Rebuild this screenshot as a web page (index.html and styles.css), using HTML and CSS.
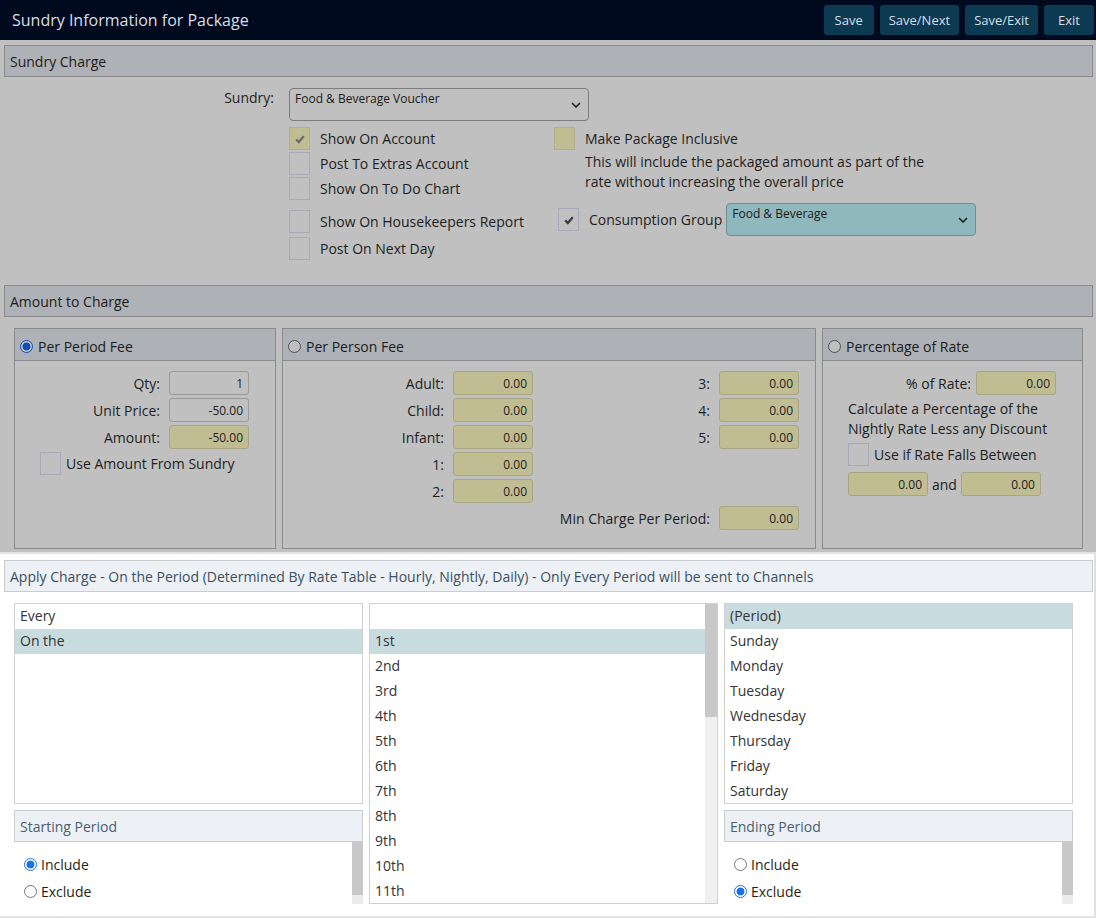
FILE: index.html
```html
<!DOCTYPE html>
<html lang="en">
<head>
<meta charset="utf-8">
<title>Sundry Information for Package</title>
<link rel="stylesheet" href="styles.css">
</head>
<body>
<header class="topbar">
  <h1 class="title">Sundry Information for Package</h1>
  <div class="actions">
    <button class="btn">Save</button>
    <button class="btn">Save/Next</button>
    <button class="btn">Save/Exit</button>
    <button class="btn">Exit</button>
  </div>
</header>

<main class="locked">
  <div class="section-head">Sundry Charge</div>

  <div class="sundry-row">
    <span class="sundry-label">Sundry:</span>
    <div class="select sundry-select">
      <span class="select-text">Food &amp; Beverage Voucher</span>
      <svg class="chev" width="10" height="6" viewBox="0 0 10 6"><path d="M1 1 L5 5 L9 1" fill="none" stroke="#1a1a1a" stroke-width="1.5"/></svg>
    </div>
  </div>

  <div class="flags">
    <div class="flag f-r1 f-c1"><span class="cb cb-tan"><svg width="12" height="12" viewBox="0 0 12 12"><path d="M2.2 6.4 L4.8 9 L9.8 3.2" fill="none" stroke="#6c6c74" stroke-width="2.4"/></svg></span>Show On Account</div>
    <div class="flag f-r1 f-c2"><span class="cb cb-tan"></span>Make Package Inclusive</div>
    <div class="flag f-r2 f-c1"><span class="cb"></span>Post To Extras Account</div>
    <p class="note">This will include the packaged amount as part of the<br>rate without increasing the overall price</p>
    <div class="flag f-r3 f-c1"><span class="cb"></span>Show On To Do Chart</div>
    <div class="flag f-r4 f-c1 f-low"><span class="cb"></span>Show On Housekeepers Report</div>
    <div class="consume">
      <span class="cb"><svg width="12" height="12" viewBox="0 0 12 12"><path d="M2.2 6.4 L4.8 9 L9.8 3.2" fill="none" stroke="#3c3c48" stroke-width="2.4"/></svg></span>
      <span class="consume-label">Consumption Group</span>
      <div class="select teal-select">
        <span class="select-text">Food &amp; Beverage</span>
        <svg class="chev" width="10" height="6" viewBox="0 0 10 6"><path d="M1 1 L5 5 L9 1" fill="none" stroke="#1a1a1a" stroke-width="1.5"/></svg>
      </div>
    </div>
    <div class="flag f-r5 f-c1"><span class="cb"></span>Post On Next Day</div>
  </div>

  <div class="section-head amount-head">Amount to Charge</div>

  <div class="panels">
    <div class="panel">
      <div class="panel-head"><span class="radio radio-on"></span>Per Period Fee</div>
      <div class="panel-body">
        <div class="fields fields-period">
          <span class="flabel">Qty:</span><span class="num num-grey">1</span>
          <span class="flabel">Unit Price:</span><span class="num num-grey">-50.00</span>
          <span class="flabel">Amount:</span><span class="num">-50.00</span>
        </div>
        <div class="check-line sundry-amount"><span class="cb"></span>Use Amount From Sundry</div>
      </div>
    </div>

    <div class="panel">
      <div class="panel-head"><span class="radio"></span>Per Person Fee</div>
      <div class="panel-body">
        <div class="fields fields-person">
          <span class="flabel">Adult:</span><span class="num">0.00</span><span class="flabel">3:</span><span class="num">0.00</span>
          <span class="flabel">Child:</span><span class="num">0.00</span><span class="flabel">4:</span><span class="num">0.00</span>
          <span class="flabel">Infant:</span><span class="num">0.00</span><span class="flabel">5:</span><span class="num">0.00</span>
          <span class="flabel">1:</span><span class="num">0.00</span><span></span><span></span>
          <span class="flabel">2:</span><span class="num">0.00</span><span></span><span></span>
          <span></span><span></span><span class="flabel">Min Charge Per Period:</span><span class="num">0.00</span>
        </div>
      </div>
    </div>

    <div class="panel">
      <div class="panel-head"><span class="radio"></span>Percentage of Rate</div>
      <div class="panel-body pct-body">
        <div class="pct-row"><span class="flabel">% of Rate:</span><span class="num">0.00</span></div>
        <p class="pct-note">Calculate a Percentage of the<br>Nightly Rate Less any Discount</p>
        <div class="check-line pct-check"><span class="cb"></span>Use if Rate Falls Between</div>
        <div class="between"><span class="num">0.00</span><span>and</span><span class="num">0.00</span></div>
      </div>
    </div>
  </div>
</main>

<section class="apply">
  <div class="apply-head">Apply Charge - On the Period (Determined By Rate Table - Hourly, Nightly, Daily) - Only Every Period will be sent to Channels</div>
  <div class="pickers">
    <div class="pick-col">
      <ul class="list list-short">
        <li>Every</li>
        <li class="sel">On the</li>
      </ul>
      <div class="period">
        <div class="period-head">Starting Period</div>
        <div class="period-body">
          <div class="period-opts">
            <div class="opt"><span class="radio radio-blue"></span>Include</div>
            <div class="opt"><span class="radio radio-white"></span>Exclude</div>
          </div>
          <div class="sb sb-small"><div class="thumb"></div></div>
        </div>
      </div>
    </div>

    <div class="list list-tall">
      <ul class="list-items">
        <li>&nbsp;</li>
        <li class="sel">1st</li>
        <li>2nd</li>
        <li>3rd</li>
        <li>4th</li>
        <li>5th</li>
        <li>6th</li>
        <li>7th</li>
        <li>8th</li>
        <li>9th</li>
        <li>10th</li>
        <li>11th</li>
      </ul>
      <div class="sb sb-list"><div class="thumb"></div></div>
    </div>

    <div class="pick-col">
      <ul class="list list-short">
        <li class="sel">(Period)</li>
        <li>Sunday</li>
        <li>Monday</li>
        <li>Tuesday</li>
        <li>Wednesday</li>
        <li>Thursday</li>
        <li>Friday</li>
        <li>Saturday</li>
      </ul>
      <div class="period">
        <div class="period-head">Ending Period</div>
        <div class="period-body">
          <div class="period-opts">
            <div class="opt"><span class="radio radio-white"></span>Include</div>
            <div class="opt"><span class="radio radio-blue"></span>Exclude</div>
          </div>
          <div class="sb sb-small"><div class="thumb"></div></div>
        </div>
      </div>
    </div>
  </div>
</section>
</body>
</html>
```

FILE: styles.css
```css
* { box-sizing: border-box; }

html, body {
  margin: 0;
  padding: 0;
}

body {
  width: 1096px;
  height: 919px;
  overflow: hidden;
  font-family: "Open Sans", "Noto Sans", "Liberation Sans", sans-serif;
  font-size: 14px;
  color: #1e1e1e;
  background: #ffffff;
}

/* ---------- top bar ---------- */
.topbar {
  height: 40px;
  background: #000a1f;
  display: flex;
  align-items: center;
  justify-content: space-between;
  padding: 0 2px 0 12px;
}

.title {
  margin: 0;
  font-size: 16px;
  font-weight: 400;
  color: #d9dee5;
}

.actions {
  display: flex;
  gap: 6px;
}

.btn {
  min-width: 50px;
  height: 30px;
  padding: 0 9px;
  border: none;
  border-radius: 3px;
  background: #0b3a52;
  color: #d7dfe6;
  font-family: "Open Sans", "Noto Sans", sans-serif;
  font-size: 13px;
}

/* ---------- locked (greyed) area ---------- */
.locked {
  background: #c0c0c0;
  padding: 5px 0 3px 0;
}

.section-head {
  height: 32px;
  margin: 0 3px 0 4px;
  padding: 2px 0 0 5px;
  line-height: 28px;
  background: #aeb1b5;
  border: 1px solid #8b8b8b;
  color: #1c1c1c;
}

.sundry-row {
  display: flex;
  align-items: flex-start;
  margin-top: 11px;
}

.sundry-label {
  width: 289px;
  padding-right: 15px;
  padding-top: 0;
  text-align: right;
  line-height: 19px;
}

.select {
  display: flex;
  justify-content: space-between;
  align-items: flex-start;
  height: 33px;
  border: 1px solid #7c7c7c;
  border-radius: 4px;
  padding: 2px 7px 0 5px;
  font-size: 12px;
  line-height: 16px;
  color: #1a1a1a;
}

.select .chev {
  align-self: center;
  margin-top: -1px;
}

.sundry-select {
  width: 300px;
  background: #c0c0c0;
}

.teal-select {
  width: 250px;
  background: #8fb8bc;
  border-color: #6f8e91;
}

.flags {
  display: grid;
  grid-template-columns: 265px 1fr;
  grid-template-rows: 25px 25px 25px 35px 25px;
  margin: 5px 0 0 289px;
}

.flag {
  display: flex;
  align-items: center;
  gap: 10px;
}

.f-r1 { grid-row: 1; }
.f-r2 { grid-row: 2; }
.f-r3 { grid-row: 3; }
.f-r4 { grid-row: 4; }
.f-r5 { grid-row: 5; }
.f-c1 { grid-column: 1; }
.f-c2 { grid-column: 2; }

.f-low {
  align-self: end;
  margin-bottom: 3px;
}

.note {
  grid-column: 2;
  grid-row: 2 / 4;
  margin: 0;
  padding: 1px 0 0 31px;
  line-height: 20px;
}

.consume {
  grid-column: 2;
  grid-row: 4;
  align-self: end;
  display: flex;
  align-items: center;
  height: 33px;
  padding-left: 4px;
}

.consume-label {
  margin: 0 4px 0 10px;
}

/* checkbox */
.cb {
  flex: none;
  width: 21px;
  height: 23px;
  border: 1px solid #a9aab9;
  display: flex;
  align-items: center;
  justify-content: center;
}

.cb-tan {
  background: #c0bd92;
  border-color: #b2af8a;
}

/* radios */
.radio {
  flex: none;
  width: 13px;
  height: 13px;
  border-radius: 50%;
  border: 1px solid #4f4f4f;
  background: #c0c0c0;
}

.radio-on {
  border: 1.5px solid #0d4fb8;
  background: radial-gradient(circle, #0d4fb8 0 3.6px, #c0c0c0 4.3px);
}

.radio-white {
  border-color: #767676;
  background: #ffffff;
}

.radio-blue {
  border: 1.5px solid #1a73e8;
  background: radial-gradient(circle, #1a73e8 0 3.6px, #ffffff 4.3px);
}

.amount-head {
  margin-top: 24px;
}

.panels {
  display: grid;
  grid-template-columns: 262px 534px 261px;
  gap: 6px;
  margin: 11px 0 0 14px;
}

.panel {
  height: 221px;
  border: 1px solid #8b8b8b;
}

.panel-head {
  height: 32px;
  display: flex;
  align-items: center;
  gap: 5px;
  padding: 3px 0 0 5px;
  background: #aeb1b5;
  border-bottom: 1px solid #8b8b8b;
  color: #1c1c1c;
}

.panel-body {
  padding-top: 10px;
}

.fields {
  display: grid;
  grid-auto-rows: 24px;
  row-gap: 3px;
  column-gap: 9px;
}

.fields-period {
  grid-template-columns: 145px 80px;
}

.fields-person {
  grid-template-columns: 161px 80px 1fr 80px;
  padding-right: 16px;
}

.flabel {
  text-align: right;
  line-height: 25px;
  white-space: nowrap;
}

.num {
  display: block;
  width: 80px;
  height: 24px;
  border: 1px solid #a8a584;
  border-radius: 3px;
  background: #c0bd92;
  text-align: right;
  padding-right: 5px;
  font-size: 12px;
  line-height: 23px;
  color: #202020;
}

.num-grey {
  background: #c0c0c0;
  border-color: #9a9a9a;
}

.check-line {
  display: flex;
  align-items: center;
  gap: 5px;
}

.sundry-amount {
  margin: 3px 0 0 25px;
}

.pct-body {
  padding: 10px 26px 0 25px;
}

.pct-row {
  display: flex;
  justify-content: flex-end;
  gap: 5px;
}

.pct-note {
  margin: 3px 0 0;
  line-height: 20px;
}

.pct-check {
  margin-top: 4px;
}

.between {
  display: flex;
  align-items: center;
  gap: 4px;
  margin-top: 6px;
}

/* ---------- apply charge ---------- */
.apply {
  border-top: 2px solid #e2e2e2;
  border-right: 2px solid #e0e0e0;
  border-bottom: 2px solid #e3e3e3;
  padding: 6px 0 12px 0;
  background: #ffffff;
}

.apply-head {
  height: 32px;
  margin: 0 1px 0 4px;
  padding: 1px 0 0 5px;
  line-height: 29px;
  background: #edf0f4;
  border: 1px solid #c9cdd2;
  color: #3a5161;
}

.pickers {
  display: grid;
  grid-template-columns: 349px 349px 349px;
  gap: 6px;
  margin: 11px 0 0 14px;
  align-items: start;
}

.pick-col {
  display: flex;
  flex-direction: column;
  gap: 6px;
}

.list {
  margin: 0;
  padding: 0;
  list-style: none;
  border: 1px solid #d0d0d0;
  overflow: hidden;
  color: #333333;
}

.list li,
.list-items li {
  height: 25px;
  line-height: 24px;
  padding-left: 5px;
  white-space: nowrap;
}

.list li.sel,
.list-items li.sel {
  background: #c8dce0;
}

.list-short {
  height: 201px;
}

.list-tall {
  height: 301px;
  display: flex;
}

.list-items {
  flex: 1;
  margin: 0;
  padding: 0;
  list-style: none;
  overflow: hidden;
}

.sb {
  flex: none;
  background: #f0f0f0;
}

.sb .thumb {
  background: #c8c8c8;
}

.sb-list {
  width: 12px;
}

.sb-list .thumb {
  height: 113px;
}

.period-head {
  height: 32px;
  padding: 2px 0 0 5px;
  line-height: 28px;
  background: #edf0f4;
  border: 1px solid #c9cdd2;
  color: #4a6170;
}

.period-body {
  height: 62px;
  display: flex;
}

.period-opts {
  flex: 1;
  padding: 9px 0 0 10px;
  color: #2a1f14;
}

.opt {
  height: 27px;
  display: flex;
  align-items: center;
  gap: 4px;
}

.sb-small {
  width: 11px;
  background: #ececec;
}

.sb-small .thumb {
  height: 53px;
}
```
